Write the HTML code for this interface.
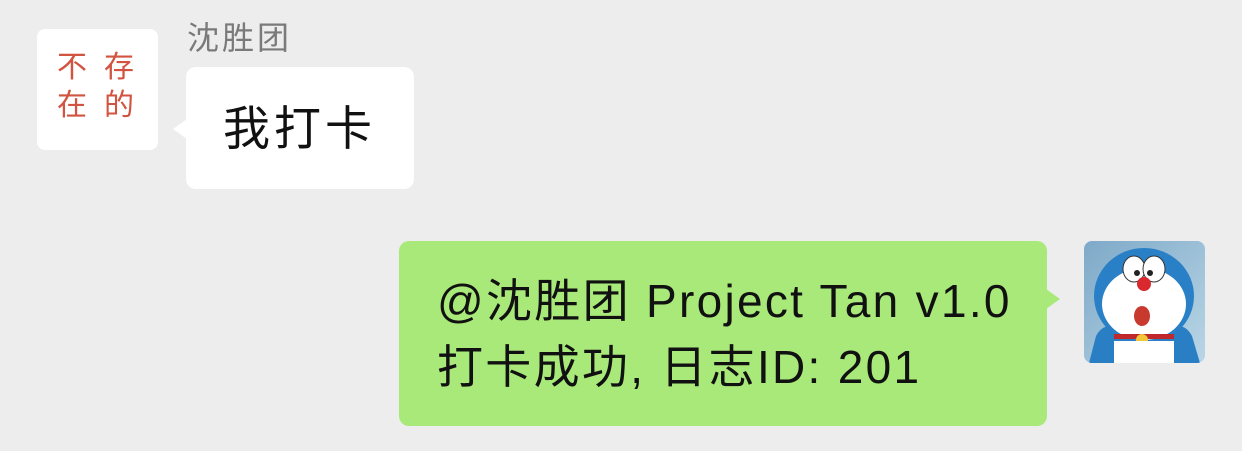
<!DOCTYPE html>
<html><head><meta charset="utf-8"><style>
body{margin:0;width:1242px;height:451px;background:#ededed;position:relative;overflow:hidden;font-family:"Liberation Sans","Noto Sans CJK SC",sans-serif}
.a{position:absolute}
</style></head><body>
<div class="a" style="left:37px;top:29px;width:121px;height:121px;background:#fff;border-radius:8px"></div>
<div class="a" style="left:57px;top:49px;width:100px;color:#d2533f;font-size:30px;line-height:38px;letter-spacing:17px">不存<br>在的</div>
<div class="a" style="left:187px;top:18px;font-size:32px;color:#7a7a7a;line-height:40px;letter-spacing:3px">沈胜团</div>
<div class="a" style="left:186px;top:67px;width:228px;height:122px;background:#fff;border-radius:10px"></div>
<div class="a" style="left:173px;top:119px;width:0;height:0;border-top:10px solid transparent;border-bottom:10px solid transparent;border-right:14px solid #fff"></div>
<div class="a" style="left:223px;top:102px;font-size:47px;line-height:54px;color:#111;letter-spacing:4px">我打卡</div>
<div class="a" style="left:399px;top:241px;width:648px;height:185px;background:#a9e97a;border-radius:10px"></div>
<div class="a" style="left:1046px;top:289px;width:0;height:0;border-top:10px solid transparent;border-bottom:10px solid transparent;border-left:14px solid #a9e97a"></div>
<div class="a" style="left:437px;top:268px;font-size:46px;line-height:66px;color:#111;letter-spacing:2.3px;white-space:nowrap">@沈胜团 Project Tan v1.0<br>打卡成功, 日志ID: 201</div>
<svg class="a" style="left:1084px;top:241px" width="121" height="122" viewBox="0 0 121 122">
<defs><linearGradient id="g" x1="0" y1="0" x2="1" y2="1"><stop offset="0" stop-color="#7ea9c8"/><stop offset="1" stop-color="#b9d6e6"/></linearGradient><clipPath id="c"><rect width="121" height="122" rx="8"/></clipPath></defs>
<g clip-path="url(#c)">
<rect width="121" height="122" fill="url(#g)"/>
<path d="M5 122 L12 95 Q20 80 35 88 L86 88 Q100 80 108 95 L116 122Z" fill="#2a7fc4"/>
<ellipse cx="60" cy="55" rx="50" ry="48" fill="#2a80c6"/>
<ellipse cx="60" cy="63" rx="42" ry="36" fill="#fff"/>
<ellipse cx="50" cy="28" rx="11" ry="13" fill="#fff" stroke="#333"/>
<ellipse cx="70" cy="28" rx="11" ry="13" fill="#fff" stroke="#333"/>
<circle cx="53" cy="32" r="3" fill="#222"/><circle cx="66" cy="32" r="3" fill="#222"/>
<circle cx="60" cy="43" r="7" fill="#d9282e"/>
<ellipse cx="58" cy="75" rx="8" ry="10" fill="#c8392e"/>
<rect x="30" y="93" width="60" height="5" fill="#c0282b"/>
<circle cx="58" cy="99" r="6" fill="#f3c63a"/>
<path d="M30 100 L90 100 L90 122 L30 122Z" fill="#fff"/>
</g></svg>
</body></html>
